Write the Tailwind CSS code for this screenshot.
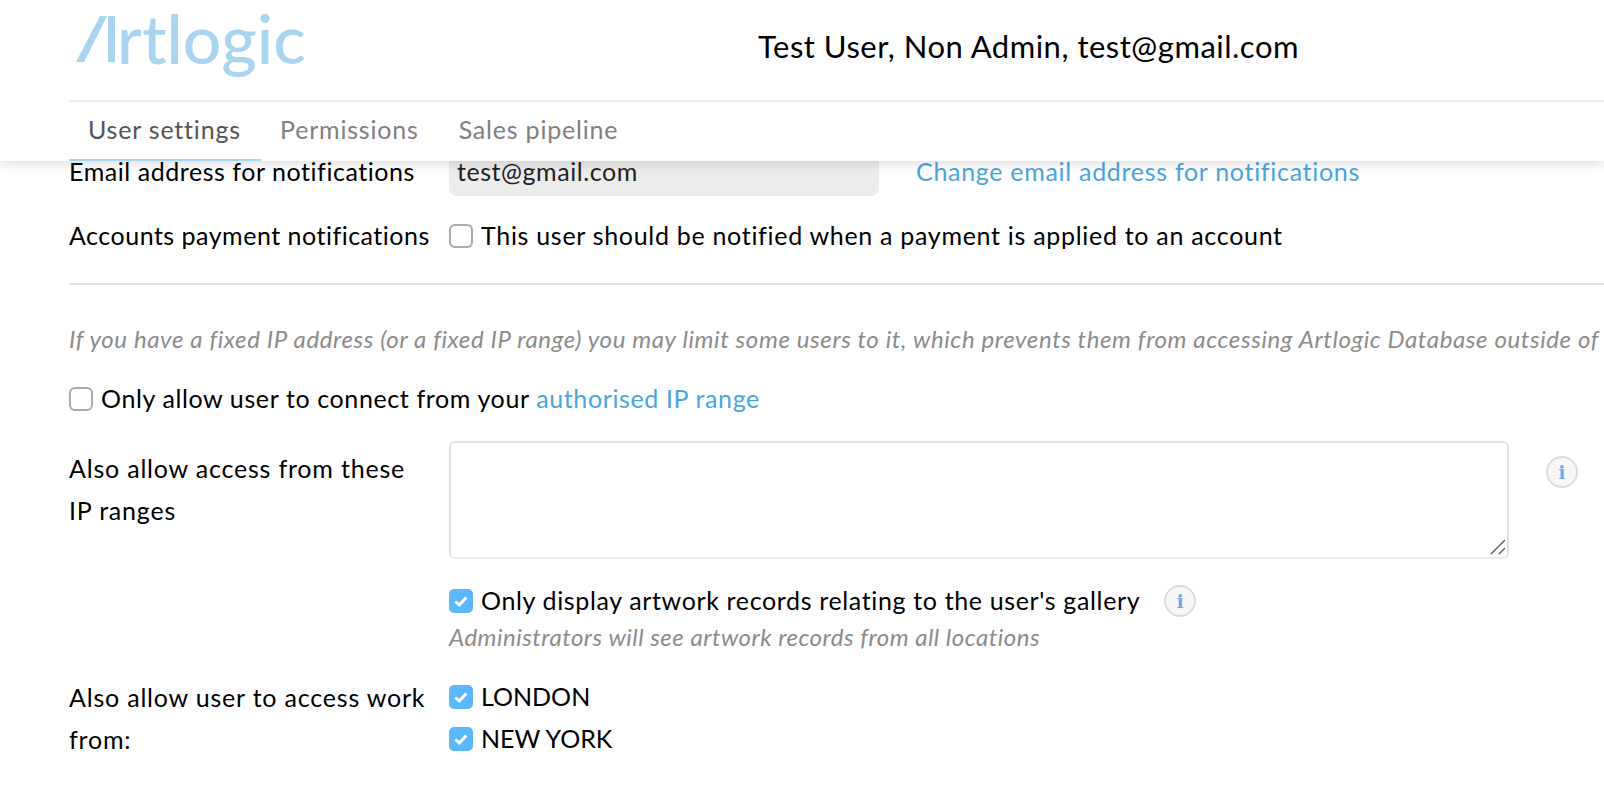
<!DOCTYPE html>
<html lang="en">
<head>
    <meta charset="UTF-8">
    <title>User settings</title>
    <script src="https://cdn.jsdelivr.net/npm/@tailwindcss/browser@4"></script>
</head>
<body class="bg-white text-black font-['Lato',sans-serif] text-[25px] tracking-[0.55px] h-screen overflow-hidden">

<!-- header -->
<header class="relative z-10 h-[161px] bg-white shadow-[0_2px_12px_rgba(0,0,0,0.15)] pl-[69px] flex flex-col">
    <div class="h-[100px] flex items-start">
        <div class="relative w-[689px] h-[100px] text-[#a9d5f0]">
            <svg class="absolute left-[7px] top-[16px]" width="40" height="46" viewBox="0 0 40 46" fill="#a9d5f0">
                <polygon points="0,46 8,46 31,0 24,0"/>
                <rect x="32" y="0" width="7" height="46"/>
            </svg>
            <span class="absolute left-[48px] top-0 text-[68px] leading-[76px] font-medium tracking-normal">rtlogic</span>
        </div>
        <div class="text-[31px] leading-[92px] tracking-[0.5px] whitespace-nowrap">Test User, Non Admin, test@gmail.com</div>
    </div>
    <nav class="flex-1 border-t-2 border-[#ececec] flex text-[#808080] tracking-[0.8px]">
        <a class="w-[192px] pl-[19px] pt-[9px] border-b-2 border-[#a9d5f0] text-[#555]">User settings</a>
        <a class="ml-[19px] pt-[9px]">Permissions</a>
        <a class="ml-[40px] pt-[9px]">Sales pipeline</a>
    </nav>
</header>

<!-- form -->
<main class="pl-[69px]">
    <div class="flex h-[35px]">
        <label class="w-[380px] leading-[21px]">Email address for notifications</label>
        <div class="w-[430px] bg-[#ececec] rounded-b-lg px-2 leading-[21px] text-[#222]">test@gmail.com</div>
        <a class="ml-[37px] leading-[21px] tracking-[0.7px] text-[#4ba6de]">Change email address for notifications</a>
    </div>
    <div class="flex items-center h-[30px] mt-[25px]">
        <label class="w-[380px] tracking-[0.5px]">Accounts payment notifications</label>
        <span class="w-6 h-6 border-2 border-[#aaa] rounded-md mr-2"></span>
        <span class="tracking-[0.7px]">This user should be notified when a payment is applied to an account</span>
    </div>
    <hr class="mt-[32px] border-t-2 border-[#e4e4e4]">
    <p class="mt-[39px] h-[30px] leading-[30px] italic text-[24px] tracking-[0.62px] text-[#8c8c8c] whitespace-nowrap">If you have a fixed IP address (or a fixed IP range) you may limit some users to it, which prevents them from accessing Artlogic Database outside of</p>
    <div class="flex items-center h-[30px] mt-[30px]">
        <span class="w-6 h-6 border-2 border-[#aaa] rounded-md mr-2"></span>
        <span class="tracking-[0.62px]">Only allow user to connect from your <a class="text-[#4ba6de]">authorised IP range</a></span>
    </div>
    <div class="flex mt-[27px]">
        <label class="w-[380px] leading-[42px] pt-[6px] tracking-[0.8px]">Also allow access from these<br>IP ranges</label>
        <div class="relative w-[1060px] h-[118px]">
            <textarea class="w-full h-full border-2 border-[#e2e2e2] border-b-[#eee] rounded-md bg-white resize-none"></textarea>
            <svg class="absolute right-[3px] bottom-[4px]" width="16" height="16" viewBox="0 0 16 16" stroke="#555" stroke-width="1.3"><path d="M1 15L15 1M9 15l6-6"/></svg>
        </div>
        <span class="ml-[37px] mt-[15px] w-8 h-8 rounded-full border-2 border-[#dcdcdc] bg-[#f7f7f7] flex items-center justify-center font-['DejaVu_Serif',serif] font-bold text-[18px] tracking-normal text-[#6ea6ea]">i</span>
    </div>
    <div class="ml-[380px] flex items-center h-[30px] mt-[27px]">
        <svg class="mr-2" width="24" height="24" viewBox="0 0 24 24"><rect width="24" height="24" rx="5" fill="#5cb8fd"/><path d="M6.5 12.5l3.8 3.5 7-7.5" fill="none" stroke="#fff" stroke-width="3"/></svg>
        <span class="tracking-[0.64px]">Only display artwork records relating to the user's gallery</span>
        <span class="ml-6 w-8 h-8 rounded-full border-2 border-[#dcdcdc] bg-[#f7f7f7] flex items-center justify-center font-['DejaVu_Serif',serif] font-bold text-[18px] tracking-normal text-[#6ea6ea]">i</span>
    </div>
    <p class="ml-[380px] mt-[6px] h-[30px] leading-[30px] italic text-[24px] tracking-[0.5px] text-[#8c8c8c]">Administrators will see artwork records from all locations</p>
    <div class="flex mt-[24px]">
        <label class="w-[380px] leading-[42px] tracking-[0.8px]">Also allow user to access work<br>from:</label>
        <div class="tracking-normal">
            <div class="flex items-center h-[42px]">
                <svg class="mr-2" width="24" height="24" viewBox="0 0 24 24"><rect width="24" height="24" rx="5" fill="#5cb8fd"/><path d="M6.5 12.5l3.8 3.5 7-7.5" fill="none" stroke="#fff" stroke-width="3"/></svg>
                LONDON
            </div>
            <div class="flex items-center h-[42px]">
                <svg class="mr-2" width="24" height="24" viewBox="0 0 24 24"><rect width="24" height="24" rx="5" fill="#5cb8fd"/><path d="M6.5 12.5l3.8 3.5 7-7.5" fill="none" stroke="#fff" stroke-width="3"/></svg>
                NEW YORK
            </div>
        </div>
    </div>
</main>

</body>
</html>
